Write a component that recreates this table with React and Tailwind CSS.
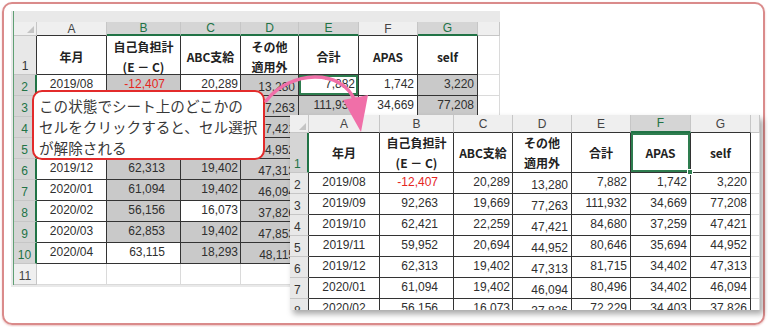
import React from 'react';

const rows = [
  ['2019/08', '-12,407', '20,289', '13,280', '7,882', '1,742', '3,220'],
  ['2019/09', '92,263', '19,669', '77,263', '111,932', '34,669', '77,208'],
  ['2019/10', '62,421', '22,259', '47,421', '84,680', '37,259', '47,421'],
  ['2019/11', '59,952', '20,694', '44,952', '80,646', '35,694', '44,952'],
  ['2019/12', '62,313', '19,402', '47,313', '81,715', '34,402', '47,313'],
  ['2020/01', '61,094', '19,402', '46,094', '80,496', '34,402', '46,094'],
  ['2020/02', '56,156', '16,073', '37,826', '72,229', '34,403', '37,826'],
  ['2020/03', '62,853', '19,402', '47,853', '81,255', '34,402', '47,853'],
  ['2020/04', '63,115', '18,293', '48,115', '81,408', '33,293', '48,115'],
];

const LETTERS = ['A', 'B', 'C', 'D', 'E', 'F', 'G'];
const HEAD = [['年月'], ['自己負担計', '(E － C)'], ['ABC支給'], ['その他', '適用外'], ['合計'], ['APAS'], ['self']];

// text placement per column (A..G)
const ALIGN = [
  'justify-center pb-[2px]',
  'justify-end pr-[15px] pb-[2px]',
  'justify-end pr-[2px] pb-[2px]',
  'justify-end pr-[3px] pt-[3px]',
  'justify-end pr-[3px] pb-[2px]',
  'justify-end pr-[3px] pb-[2px]',
  'justify-end pr-[3px] pb-[2px]',
];

const back = {
  W: ['w-[23px]', 'w-[70px]', 'w-[74px]', 'w-[60px]', 'w-[58px]', 'w-[60px]', 'w-[59px]', 'w-[60px]', 'w-[22px]'],
  headH: 'h-[14px]',
  row1H: 'h-[39px]',
  row1Pad: 'pt-[4px]',
  selCols: [1, 2, 3, 4, 6],
  selRows: [2, 3, 4, 5, 6, 7, 8, 9, 10],
  gray: [[1, 3, 6], [1, 2, 3, 4, 6], [1, 2, 3], [1, 2, 3], [1, 2, 3], [1, 2, 3], [1, 3], [1, 2, 3], [2, 3]],
  active: [2, 4],
  rowNum: 'justify-center',
  count: 9,
  blankRow: true,
};

const front = {
  W: ['w-[19px]', 'w-[71px]', 'w-[74px]', 'w-[59px]', 'w-[59px]', 'w-[59px]', 'w-[60px]', 'w-[60px]', 'w-[9px]'],
  headH: 'h-[18px]',
  row1H: 'h-[40px]',
  row1Pad: 'pt-0',
  selCols: [5],
  selRows: [1],
  gray: [],
  active: [1, 5],
  rowNum: 'justify-start pl-[4px]',
  count: 7,
  blankRow: false,
};

function Corner({ w, h }) {
  return (
    <div className={`relative shrink-0 ${w} ${h} border-r border-b border-[#c6c6c6] bg-[#efefef]`}>
      <svg className="absolute bottom-[2px] right-[2px]" width="7" height="7" viewBox="0 0 7 7">
        <polygon points="7,0 7,7 0,7" fill="#c4c4c4" />
      </svg>
    </div>
  );
}

function ColHead({ w, h, label, sel, edge }) {
  const tone = sel
    ? 'bg-[#d5d5d5] text-[#217346] border-b-2 border-b-[#217346]'
    : edge
      ? 'bg-[#efefef] text-[#444] border-b border-b-[#c6c6c6]'
      : 'bg-[#efefef] text-[#444] border-b border-b-[#333]';
  return (
    <div className={`flex shrink-0 items-center justify-center ${w} ${h} border-r border-[#c6c6c6] text-[12px] leading-none ${tone}`}>
      {label}
    </div>
  );
}

function RowHead({ w, h, n, sel, edge, align }) {
  const tone = sel
    ? 'bg-[#d5d5d5] text-[#217346] border-r-2 border-r-[#217346]'
    : edge
      ? 'bg-[#efefef] text-[#444] border-r border-r-[#c6c6c6]'
      : 'bg-[#e8e8e8] text-[#333] border-r border-r-[#333]';
  return (
    <div className={`flex shrink-0 items-end pb-[2px] ${align} ${w} ${h} border-b border-[#c6c6c6] text-[12px] leading-none ${tone}`}>
      {n}
    </div>
  );
}

function Cell({ w, h, className, children }) {
  return (
    <div className={`relative flex shrink-0 items-center ${w} ${h} border-r border-b ${className}`}>
      {children}
    </div>
  );
}

function Sheet({ cfg }) {
  const { W } = cfg;
  return (
    <div>
      <div className="flex">
        <Corner w={W[0]} h={cfg.headH} />
        {LETTERS.map((l, i) => (
          <ColHead key={l} w={W[i + 1]} h={cfg.headH} label={l} sel={cfg.selCols.includes(i)} />
        ))}
        <ColHead w={W[8]} h={cfg.headH} label="" edge />
      </div>

      <div className="flex">
        <RowHead w={W[0]} h={cfg.row1H} n="1" sel={cfg.selRows.includes(1)} align={cfg.rowNum} />
        {HEAD.map((lines, i) => {
          const act = cfg.active[0] === 1 && cfg.active[1] === i;
          return (
            <Cell
              key={i}
              w={W[i + 1]}
              h={cfg.row1H}
              className={`flex-col justify-center ${cfg.row1Pad} border-[#333] bg-white font-['Noto_Sans_CJK_JP',sans-serif] text-[12px] font-bold leading-[20px] text-[#222] ${act ? 'z-10 ring-2 ring-inset ring-[#2e7d4f]' : ''}`}
            >
              {lines.map((t) => (
                <span key={t}>{t}</span>
              ))}
              {act && <span className="absolute -bottom-[3px] -right-[3px] h-[6px] w-[6px] border border-white bg-[#2e7d4f]" />}
            </Cell>
          );
        })}
        <Cell w={W[8]} h={cfg.row1H} className="border-[#dadada] bg-white" />
      </div>

      {rows.slice(0, cfg.count).map((r, ri) => {
        const n = ri + 2;
        const g = cfg.gray[ri] || [];
        return (
          <div key={n} className="flex">
            <RowHead w={W[0]} h="h-[21px]" n={n} sel={cfg.selRows.includes(n)} align={cfg.rowNum} />
            {r.map((v, ci) => {
              const act = cfg.active[0] === n && cfg.active[1] === ci;
              return (
                <Cell
                  key={ci}
                  w={W[ci + 1]}
                  h="h-[21px]"
                  className={`${ALIGN[ci]} border-[#333] text-[12px] leading-none ${g.includes(ci) ? 'bg-[#c9c9c9]' : 'bg-white'} ${v.startsWith('-') ? 'text-[#e5261f]' : 'text-[#2f2f2f]'} ${act ? 'ring-2 ring-inset ring-[#2e7d4f]' : ''}`}
                >
                  {v}
                </Cell>
              );
            })}
            <Cell w={W[8]} h="h-[21px]" className="border-[#dadada] bg-white" />
          </div>
        );
      })}

      {cfg.blankRow && (
        <div className="flex">
          <RowHead w={W[0]} h="h-[21px]" n="11" edge align={cfg.rowNum} />
          {W.slice(1).map((w, i) => (
            <Cell key={i} w={w} h="h-[21px]" className="border-[#dadada] bg-white" />
          ))}
        </div>
      )}
    </div>
  );
}

export default function App() {
  return (
    <div className="relative h-[327px] w-[768px] overflow-hidden bg-white font-['Liberation_Sans','Noto_Sans_CJK_JP',sans-serif]">
      <div className="m-[2px] h-[323px] w-[763px] rounded-[10px] border-2 border-[#da8b8b] p-[7px] shadow-[0_1px_2px_rgba(210,120,120,0.45)]">
        <div className="w-[489px] bg-[#e9e9e9] pb-[2px] pl-[2px]">
          <div className="border-l border-[#5f9f74]">
            <div className="h-[11px]" />
            <Sheet cfg={back} />
          </div>
        </div>
      </div>

      {/* callout */}
      <div className="absolute left-[32px] top-[90px] h-[70px] w-[233px] rounded-[10px] border-2 border-[#e32b2b] bg-white pl-[5px] pt-[3px] font-['Noto_Sans_CJK_JP',sans-serif] text-[14.6px] leading-[21px] whitespace-nowrap text-[#383838]">
        この状態でシート上のどこかの
        <br />
        セルをクリックすると、セル選択
        <br />
        が解除される
      </div>

      {/* front sheet */}
      <div className="absolute left-[290px] top-[115px] h-[195px] w-[470px] overflow-hidden bg-white shadow-[3px_4px_6px_rgba(0,0,0,0.35)]">
        <Sheet cfg={front} />
      </div>

      {/* arrow */}
      <svg className="pointer-events-none absolute left-0 top-0" width="768" height="327" viewBox="0 0 768 327">
        <path d="M266 101 C290 70 342 68 355 101" fill="none" stroke="#f06fa8" strokeWidth="3.5" strokeLinecap="round" />
        <polygon points="343,100 368,95 361,132" fill="#f06fa8" />
      </svg>
    </div>
  );
}
